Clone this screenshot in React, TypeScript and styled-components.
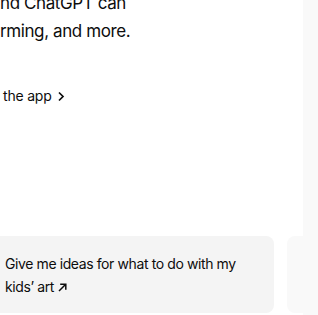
import React from 'react'
import styled, { createGlobalStyle } from 'styled-components'

const GlobalStyle = createGlobalStyle`
  html, body {
    margin: 0;
    padding: 0;
    background: #ffffff;
    overflow: hidden;
  }
  body {
    font-family: Inter, 'Liberation Sans', sans-serif;
    color: #0d0d0d;
    -webkit-font-smoothing: antialiased;
  }
`

const Page = styled.div`
  display: flex;
  width: 318px;
  height: 315px;
  overflow: hidden;
`

const Content = styled.main`
  flex: 1;
  display: flex;
  flex-direction: column;
  overflow: hidden;
`

const Rail = styled.div`
  width: 15px;
  flex-shrink: 0;
  background: #f9f9f9;
`

const Lead = styled.p`
  margin: -11px 0 0;
  font-size: 17px;
  line-height: 28px;
  letter-spacing: -0.4px;
  white-space: nowrap;
`

const AppLink = styled.a`
  display: inline-flex;
  align-items: center;
  gap: 5px;
  margin-top: 41px;
  padding-left: 3px;
  font-size: 14px;
  line-height: 20px;
  letter-spacing: -0.2px;
  color: #0d0d0d;
  text-decoration: none;
`

const Prompts = styled.div`
  display: flex;
  gap: 13px;
  margin: auto 0 2px -12px;
`

const PromptCard = styled.div<{ $faded?: boolean }>`
  flex-shrink: 0;
  box-sizing: border-box;
  width: 286px;
  height: 77px;
  padding: 16px 17px 0;
  border-radius: 8px;
  background: ${({ $faded }) => ($faded ? '#f9f9f9' : '#f4f4f4')};
  font-size: 14px;
  line-height: 23px;
  letter-spacing: -0.4px;
  cursor: pointer;
`

const Arrow = styled.svg`
  display: inline-block;
  vertical-align: 0;
  margin-left: 4px;
`

const Chevron = () => (
  <svg width="8" height="11" viewBox="0 0 8 11" fill="none">
    <path d="M2 1.5 6 5.5 2 9.5" stroke="#0d0d0d" strokeWidth="1.7" />
  </svg>
)

export default function App() {
  return (
    <>
      <GlobalStyle />
      <Page>
        <Content>
          <Lead>
            nd ChatGPT can
            <br />
            rming, and more.
          </Lead>
          <div>
            <AppLink href="#">
              the app <Chevron />
            </AppLink>
          </div>
          <Prompts>
            <PromptCard>
              Give me ideas for what to do with my
              <br />
              kids’ art
              <Arrow width="9" height="9" viewBox="0 0 9 9" fill="none">
                <path d="M1 8 7.5 1.5M2.2 1.2h5.6v5.6" stroke="#0d0d0d" strokeWidth="1.5" />
              </Arrow>
            </PromptCard>
            <PromptCard $faded />
          </Prompts>
        </Content>
        <Rail />
      </Page>
    </>
  )
}
